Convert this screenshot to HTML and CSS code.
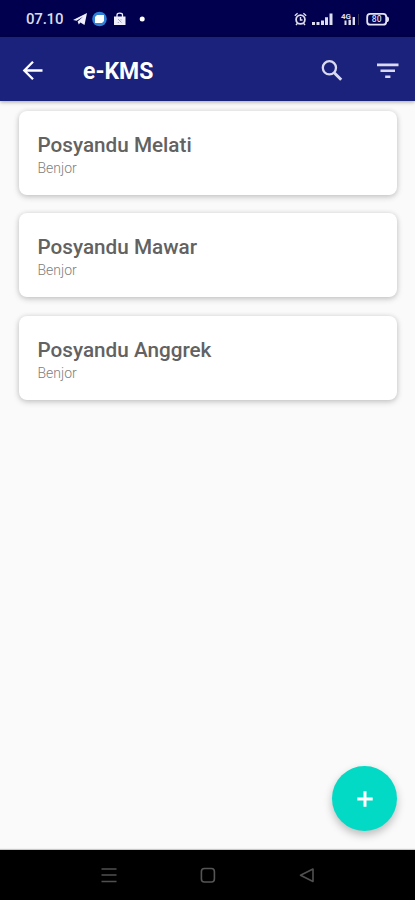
FILE: index.html
```html
<!DOCTYPE html>
<html lang="id">
<head>
<meta charset="utf-8">
<meta name="viewport" content="width=device-width, initial-scale=1">
<title>e-KMS</title>
<link rel="stylesheet" href="styles.css">
</head>
<body>
<div class="screen">
  <div class="status">
    <span class="clock">07.10</span>
    <svg class="notifications" width="76" height="16" viewBox="0 0 76 16">
      <path fill="#eef" d="M0 9 14 2 11.500 14 7.400 11.400 5.800 13.600 4.600 10.400 10 5.700 3.500 9.800Z"/>
      <circle cx="26.500" cy="8" r="7.300" fill="#2f7fd6"/>
      <path fill="#fff" d="M24 4h7v6l-2 2h-7V6Z"/>
      <path fill="#eef" d="M41 5.500h11.500V14H41Z"/>
      <path fill="none" stroke="#eef" stroke-width="1.300" d="M44 6V4q0-1.800 2.800-1.800T49.500 4V6"/>
      <path fill="none" stroke="#99a" stroke-width=".9" d="m45 8 3.500 3.500M48 8.300v1M45.300 11v1"/>
      <circle cx="69.200" cy="8" r="2.500" fill="#fff"/>
    </svg>
    <svg class="indicators" width="96" height="16" viewBox="0 0 96 16">
      <g fill="none" stroke="#dde">
        <circle cx="6.500" cy="8.500" r="4.400" stroke-width="1.800"/>
        <path stroke-width="1.400" d="M6.500 6v3h2M.8 4.700 3.600 2.300M12.200 4.700 9.400 2.300M3.500 12.200 2 14M9.500 12.200 11 14"/>
      </g>
      <path fill="#dde" d="M18 11h3v3h-3zM22.500 11h3v3h-3zM27 9.500h3V14h-3zM31 6.300h3V14h-3zM35.500 2.500h3V14h-3z"/>
      <text class="network" x="47" y="8">4G</text>
      <path fill="#dde" d="M50.500 9.500h2V14h-2zM54.500 8.800h2.400V14h-2.400zM58.600 6H61v8h-2.400z"/>
      <path stroke="#445" stroke-width=".8" d="M64.500 3v11"/>
      <rect x="73.200" y="2.900" width="19" height="10.800" rx="3" fill="none" stroke="#e4e4f4" stroke-width="1.800"/>
      <path fill="#dde" d="M93 5.500q2 0 2 2.800t-2 2.800Z"/>
      <text class="charge" x="77.800" y="11.200">80</text>
    </svg>
  </div>
  <header class="appbar">
    <svg class="back" width="28" height="28" viewBox="0 0 28 28"><path fill="none" stroke="#fff" stroke-width="2.300" d="M23.500 13.500H5.500M14 4.800 5.300 13.500l8.700 8.700"/></svg>
    <h1 class="title">e-KMS</h1>
    <svg class="search" width="28" height="28" viewBox="0 0 28 28"><g fill="none" stroke="#d9daf0"><circle cx="11.400" cy="10.800" r="6.600" stroke-width="2.300"/><path stroke-width="3" d="m16.200 15.700 7 7"/></g></svg>
    <svg class="filter" width="28" height="28" viewBox="0 0 28 28"><path fill="#d9daf0" d="M3 6.500h21.500v2.800H3zM6.500 12.600H21v2.500H6.500zM11.200 18.600h5.200v2.400h-5.200z"/></svg>
  </header>
  <main class="content">
    <article class="card"><h2 class="name">Posyandu Melati</h2><p class="place">Benjor</p></article>
    <article class="card"><h2 class="name">Posyandu Mawar</h2><p class="place">Benjor</p></article>
    <article class="card"><h2 class="name">Posyandu Anggrek</h2><p class="place">Benjor</p></article>
    <button class="fab" aria-label="Tambah"><svg width="16" height="16" viewBox="0 0 16 16"><path stroke="#fff" stroke-width="3" d="M8 .3v15.400M.3 8h15.400"/></svg></button>
  </main>
  <nav class="navbar">
    <svg width="20" height="20" viewBox="0 0 20 20"><path stroke="#505050" stroke-width="1.700" d="M2.500 4h15M2.500 10h15M2.500 16.500h15"/></svg>
    <svg width="20" height="20" viewBox="0 0 20 20"><rect x="3.400" y="3.500" width="13" height="13.500" rx="3" fill="none" stroke="#555" stroke-width="1.600"/></svg>
    <svg width="20" height="20" viewBox="0 0 20 20"><path fill="none" stroke="#505050" stroke-width="1.600" stroke-linejoin="round" d="M16 4v12.500L3.500 10.200Z"/></svg>
  </nav>
</div>
</body>
</html>
```

FILE: styles.css
```css
* { box-sizing: border-box; }
body {
  margin: 0;
  font-family: Roboto, "Liberation Sans", sans-serif;
}
svg { display: block; flex: none; }
.screen {
  display: flex;
  flex-direction: column;
  width: 415px;
  height: 900px;
  overflow: hidden;
  background: #fafafa;
}
.status {
  display: flex;
  align-items: center;
  flex: none;
  height: 37px;
  padding: 1px 25px 0 26px;
  background: #00004e;
}
.clock {
  width: 47px;
  font-size: 15px;
  line-height: 18px;
  letter-spacing: -0.2px;
  font-weight: 500;
  color: #dcdcec;
}
.indicators { margin-left: auto; }
.network { font-size: 8px; font-weight: 700; fill: #dde; }
.charge { font-size: 8.5px; font-weight: 500; fill: #dde; }
.appbar {
  display: flex;
  align-items: center;
  flex: none;
  z-index: 1;
  height: 64px;
  padding: 3px 13px 0 19px;
  background: #1b227b;
  box-shadow: 0 1px 4px rgba(0, 0, 0, 0.35);
}
.title {
  margin: 2px 0 0 36px;
  font-size: 23px;
  line-height: 28px;
  font-weight: 700;
  color: #fff;
}
.search { margin-left: auto; }
.filter { margin-left: 28px; }
.content {
  position: relative;
  display: flex;
  flex-direction: column;
  flex: 1;
  gap: 18.4px;
  padding: 10px 18px 0 19px;
}
.card {
  flex: none;
  height: 84px;
  padding: 22px 18.500px 0;
  border-radius: 8px;
  background: #fff;
  box-shadow: 0 2px 6px rgba(0, 0, 0, 0.2), 0 0 5px rgba(0, 0, 0, 0.08);
}
.name {
  margin: 0;
  font-size: 20.7px;
  line-height: 25px;
  font-weight: 500;
  color: #626262;
}
.place {
  margin: 2px 0 0;
  font-size: 14px;
  line-height: 17px;
  font-weight: 300;
  color: #808080;
}
.fab {
  position: absolute;
  right: 18px;
  bottom: 19px;
  display: flex;
  align-items: center;
  justify-content: center;
  width: 65px;
  height: 65px;
  padding: 0;
  border: 0;
  border-radius: 50%;
  background: #03dac5;
  box-shadow: 0 4px 8px rgba(0, 0, 0, 0.25);
}
.navbar {
  display: flex;
  align-items: center;
  justify-content: space-between;
  flex: none;
  height: 50px;
  padding: 0 98px 0 99px;
  background: #000;
  box-shadow: 0 -1px 1px rgba(0, 0, 0, 0.2);
}
```
